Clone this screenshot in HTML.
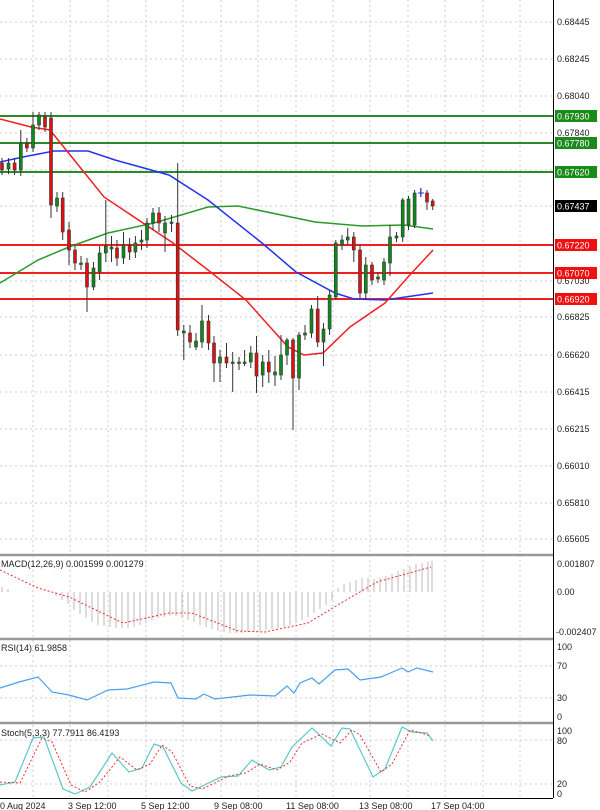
<!DOCTYPE html><html><head><style>body{margin:0;background:#fff}svg{display:block}text{font-family:"Liberation Sans",sans-serif;font-size:9px;fill:#222}</style></head><body>
<svg width="600" height="810" viewBox="0 0 600 810">
<rect width="600" height="810" fill="#fff"/>
<g stroke="#ccc" stroke-dasharray="2,3" stroke-width="1">
<path d="M33 0V798M70 0V798M108 0V798M146 0V798M183 0V798M221 0V798M258 0V798M296 0V798M333 0V798M370 0V798M408 0V798M445 0V798M483 0V798M520 0V798"/>
<path d="M0 22H553M0 59H553M0 96H553M0 133H553M0 170H553M0 206H553M0 245H553M0 281H553M0 317H553M0 355H553M0 392H553M0 429H553M0 466H553M0 503H553M0 539H553M0 666H553M0 698H553M0 740H553M0 784H553"/>
</g>
<g stroke="#2a8a2a" stroke-width="2"><path d="M0 116H553M0 143H553M0 172H553"/></g>
<g stroke="#f02020" stroke-width="2"><path d="M0 245H553M0 273H553M0 299H553"/></g>
<g fill="none" stroke-width="1.5">
<polyline stroke="#2a9a2a" points="0,283 38,260 69,247 108,233 154,223 208,207 238,206 315,222 362,226 404,225 433,229"/>
<polyline stroke="#2233ee" points="0,162 23,157 54,151 88,151 115,160 169,175 208,200 262,243 296,272 335,293 354,299 385,300 433,293"/>
<polyline stroke="#f02020" points="0,119 31,127 50,130 104,197 173,243 208,270 246,300 288,347 304,355 323,353 350,327 385,303 408,277 433,250"/>
</g>
<g stroke="#333" stroke-width="1">
<path d="M2 158V175M8.5 158V174M14.6 158V175M20.8 130V176M26.9 138V152M33 112V152M39 112V130M45 112V132M51 112V218M57 192V212M62.7 192V240M69 222V265M75 244V270M81 256V270M87 258V312M93.5 262V290M99.6 246V280M105.8 200V262M111.5 236V262M117 240V266M123.5 232V264M129.6 238V260M135.4 236V258M141.5 230V250M147 218V248M153 208V230M159 207V232M165 216V252M171.5 215V232M177.7 163V336M183.8 325V360M190 325V348M196 333V350M202 305V348M208.5 315V350M214 336V382M220 350V382M226.5 343V368M232.7 352V392M239 357V370M244.6 350V366M250.8 346V368M256.5 336V393M262.7 355V387M268.8 350V383M275 356V386M281 335V380M287 338V365M293 338V430M299 332V390M305 325V340M311.5 305V338M317.7 296V347M323.5 323V366M329.6 290V335M335.8 240V300M342 235V250M347.7 228V245M353.8 232V262M360 245V298M365.8 257V300M372 262V285M378 272V283M384 258V285M390 225V276M396.5 232V242M402.7 198V242M408.5 196V230M414.6 190V228M420.8 188V197M427 190V210M432.7 199V210"/>
</g>
<g stroke="#333" stroke-width="0.6">
<g fill="#e01010">
<rect x="0.5" y="163" width="3" height="7"/><rect x="13.1" y="163" width="3" height="7"/><rect x="25.4" y="143" width="3" height="5"/><rect x="43.5" y="117" width="3" height="10"/><rect x="49.5" y="118" width="3" height="87"/><rect x="61.2" y="198" width="3" height="34"/><rect x="67.5" y="230" width="3" height="20"/><rect x="73.5" y="250" width="3" height="13"/><rect x="85.5" y="263" width="3" height="24"/><rect x="115.5" y="248" width="3" height="10"/><rect x="128.1" y="245" width="3" height="7"/><rect x="157.5" y="213" width="3" height="10"/><rect x="176.2" y="223" width="3" height="107"/><rect x="188.5" y="333" width="3" height="9"/><rect x="207" y="321" width="3" height="22"/><rect x="212.5" y="343" width="3" height="20"/><rect x="225" y="357" width="3" height="6"/><rect x="255" y="353" width="3" height="23"/><rect x="267.3" y="362" width="3" height="10"/><rect x="291.5" y="340" width="3" height="38"/><rect x="316.2" y="309" width="3" height="33"/><rect x="352.3" y="237" width="3" height="13"/><rect x="358.5" y="250" width="3" height="43"/><rect x="370.5" y="265" width="3" height="15"/><rect x="425.5" y="193" width="3" height="9"/><rect x="431.2" y="201" width="3" height="5"/>
</g>
<g fill="#0f8a1a">
<rect x="7" y="163" width="3" height="6"/><rect x="19.3" y="143" width="3" height="27"/><rect x="31.5" y="125" width="3" height="23"/><rect x="37.5" y="115" width="3" height="10"/><rect x="55.5" y="198" width="3" height="8"/><rect x="79.5" y="263" width="3" height="1.5"/><rect x="92" y="268" width="3" height="19"/><rect x="98.1" y="253" width="3" height="19"/><rect x="104.3" y="246" width="3" height="7"/><rect x="110" y="247" width="3" height="2"/><rect x="122" y="245" width="3" height="13"/><rect x="133.9" y="243" width="3" height="9"/><rect x="140" y="240" width="3" height="2"/><rect x="145.5" y="223" width="3" height="17"/><rect x="151.5" y="213" width="3" height="10"/><rect x="163.5" y="223" width="3" height="10"/><rect x="170" y="222" width="3" height="1.5"/><rect x="182.3" y="331" width="3" height="2"/><rect x="194.5" y="341" width="3" height="6"/><rect x="200.5" y="321" width="3" height="21"/><rect x="218.5" y="357" width="3" height="6"/><rect x="231.2" y="362" width="3" height="1.5"/><rect x="237.5" y="362" width="3" height="1.5"/><rect x="243.1" y="362" width="3" height="1.5"/><rect x="249.3" y="353" width="3" height="9"/><rect x="261.2" y="362" width="3" height="13"/><rect x="273.5" y="372" width="3" height="3"/><rect x="279.5" y="355" width="3" height="20"/><rect x="285.5" y="340" width="3" height="15"/><rect x="297.5" y="335" width="3" height="43"/><rect x="303.5" y="333" width="3" height="2"/><rect x="310" y="309" width="3" height="24"/><rect x="322" y="329" width="3" height="13"/><rect x="328.1" y="295" width="3" height="34"/><rect x="334.3" y="243" width="3" height="54"/><rect x="340.5" y="240" width="3" height="5"/><rect x="346.2" y="237" width="3" height="3"/><rect x="364.3" y="265" width="3" height="28"/><rect x="376.5" y="277" width="3" height="2"/><rect x="382.5" y="262" width="3" height="18"/><rect x="388.5" y="237" width="3" height="26"/><rect x="395" y="236" width="3" height="2"/><rect x="401.2" y="200" width="3" height="37"/><rect x="407" y="199" width="3" height="26"/><rect x="413.1" y="193" width="3" height="32"/>
</g>
</g>
<path d="M418 193H424M420.8 188V197" stroke="#2233ee" stroke-width="1"/>
<!-- right axis -->
<path d="M553.5 0V798" stroke="#000" stroke-width="1"/>
<g>
<text x="557" y="25">0.68445</text><text x="557" y="62">0.68245</text><text x="557" y="99">0.68040</text><text x="557" y="136">0.67840</text><text x="557" y="284">0.67030</text><text x="557" y="320">0.66825</text><text x="557" y="358">0.66620</text><text x="557" y="395">0.66415</text><text x="557" y="432">0.66215</text><text x="557" y="469">0.66010</text><text x="557" y="506">0.65810</text><text x="557" y="542">0.65605</text>
</g>
<rect x="555" y="110" width="42" height="12" fill="#1a8a1a"/><text x="557" y="119.5" style="fill:#fff">0.67930</text>
<rect x="555" y="137" width="42" height="12" fill="#1a8a1a"/><text x="557" y="146.5" style="fill:#fff">0.67780</text>
<rect x="555" y="166" width="42" height="12" fill="#1a8a1a"/><text x="557" y="175.5" style="fill:#fff">0.67620</text>
<rect x="555" y="200" width="42" height="12" fill="#000"/><text x="557" y="209.5" style="fill:#fff">0.67437</text>
<rect x="555" y="239" width="42" height="12" fill="#f01010"/><text x="557" y="248.5" style="fill:#fff">0.67220</text>
<rect x="555" y="267" width="42" height="12" fill="#f01010"/><text x="557" y="276.5" style="fill:#fff">0.67070</text>
<rect x="555" y="293" width="42" height="12" fill="#f01010"/><text x="557" y="302.5" style="fill:#fff">0.66920</text>
<!-- separators -->
<g stroke="#999" stroke-width="2.5"><path d="M0 555H553M0 639H553M0 723H553"/></g>
<path d="M0 798.5H553" stroke="#000"/>
<!-- MACD -->
<g stroke="#bbb" stroke-width="1">
<path d="M2 592V587M8 592V589M56 592V596M62 592V600M68 592V604M74 592V610M80 592V614M86 592V618M92 592V622M98 592V625M104 592V626M110 592V627M116 592V628M122 592V628M128 592V628M134 592V627M140 592V625M146 592V623M152 592V620M158 592V618M164 592V617M170 592V616M176 592V616M182 592V618M188 592V620M194 592V622M200 592V625M206 592V627M212 592V629M218 592V631M224 592V632M230 592V633M236 592V633M242 592V633M248 592V632M254 592V632M260 592V631M266 592V630M272 592V629M278 592V628M284 592V627M290 592V625M296 592V623M302 592V620M308 592V617M314 592V613M320 592V609M326 592V605M332 592V600M338 592V588M344 592V584M350 592V582M356 592V580M362 592V578M368 592V578M374 592V579M380 592V578M386 592V576M392 592V574M398 592V571M404 592V569M410 592V566M416 592V564M422 592V563M428 592V562M432 592V561"/>
</g>
<polyline fill="none" stroke="#f03030" stroke-dasharray="2,2" stroke-width="1" points="0,570 38,588 69,597 123,623 169,613 192,613 238,631 265,632 308,623 346,600 377,582 431,567"/>
<text x="1" y="567">MACD(12,26,9) 0.001599 0.001279</text>
<text x="557" y="567">0.001807</text><text x="557" y="595">0.00</text><text x="556" y="635">-0.002407</text>
<!-- RSI -->
<polyline fill="none" stroke="#4a9ff0" stroke-width="1.2" points="0,688 19,682 38,677 52,692 69,695 87,700 108,690 127,689 154,682 171,683 178,698 196,699 204,694 215,699 250,695 275,696 287,686 294,693 300,683 312,678 319,684 335,670 348,669 360,680 381,677 402,668 408,672 417,668 433,672"/>
<text x="1" y="651">RSI(14) 61.9858</text>
<text x="557" y="650">100</text><text x="557" y="669">70</text><text x="557" y="701">30</text><text x="557" y="720">0</text>
<!-- Stoch -->
<polyline fill="none" stroke="#5cc8c8" stroke-width="1.2" points="0,785 15,782 33,738 44,737 63,789 75,794 90,787 112,753 129,772 142,768 154,744 163,747 181,783 192,791 221,777 238,776 252,760 269,770 281,767 292,747 312,728 331,746 342,728 350,729 373,777 385,769 402,727 412,732 427,733 433,741"/>
<polyline fill="none" stroke="#f03030" stroke-dasharray="2,2" stroke-width="1" points="0,782 20,783 42,738 52,742 71,785 85,792 100,782 120,757 137,770 150,764 162,745 172,752 190,786 202,789 229,776 246,773 260,764 277,770 290,762 302,743 322,734 340,743 352,730 360,735 381,772 392,764 410,730 421,733 431,736"/>
<text x="1" y="736">Stoch(5,3,3) 77.7911 86.4193</text>
<text x="557" y="734">100</text><text x="557" y="744">80</text><text x="557" y="787">20</text><text x="557" y="797">0</text>
<!-- time axis -->
<text x="0" y="809">0 Aug 2024</text><text x="68" y="809">3 Sep 12:00</text><text x="141" y="809">5 Sep 12:00</text><text x="214" y="809">9 Sep 08:00</text><text x="286" y="809">11 Sep 08:00</text><text x="359" y="809">13 Sep 08:00</text><text x="431" y="809">17 Sep 04:00</text>
</svg></body></html>
